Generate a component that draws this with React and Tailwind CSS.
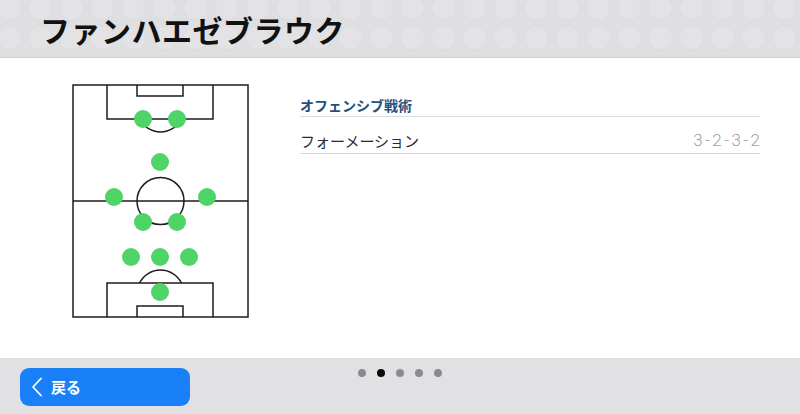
import React from 'react';

const players = [
  [143, 119], [177, 119],
  [160, 162],
  [114, 197], [207, 197],
  [143, 222], [177, 222],
  [131, 257], [160, 257], [189, 257],
  [160, 292],
];

// Formation pitch drawing
const Pitch = () => (
  <svg width="178" height="236" viewBox="72 84 178 236" fill="none">
    <g stroke="#1c1c1c" strokeWidth="1.5">
      <rect x="73" y="85" width="175" height="232" fill="#fff" />
      <line x1="73" y1="201" x2="248" y2="201" />
      <circle cx="160.5" cy="201" r="23.5" />
      <path d="M107 85V119H213V85" />
      <path d="M137 85V96H183V85" />
      <path d="M139.5 119A23.5 23.5 0 0 0 181.5 119" />
      <path d="M107 317V283H213V317" />
      <path d="M137 317V306H183V317" />
      <path d="M139.5 283A23.5 23.5 0 0 1 181.5 283" />
    </g>
    {players.map(([x, y], i) => (
      <circle key={i} cx={x} cy={y} r="9" fill="#4fd467" />
    ))}
  </svg>
);

const ChevronLeft = ({ className = "w-4 h-5" }) => (
  <svg className={className} viewBox="0 0 12 20" fill="none" stroke="currentColor" strokeWidth="1.8" strokeLinecap="round" strokeLinejoin="round">
    <path d="M10 1.5 2 10l8 8.5" />
  </svg>
);

const App = () => {
  return (
    <div className="w-[800px] h-[414px] flex flex-col bg-white overflow-hidden font-['Noto_Sans_CJK_JP','Noto_Sans',sans-serif]">
      {/* Header */}
      <div className="h-[58px] shrink-0 flex items-center pl-[40px] border-b border-[#cfcfd2] bg-[#dfdfe1] bg-[radial-gradient(circle,#e3e3e5_11px,#dcdcde_12px,transparent_13px)] bg-[length:31px_30px] bg-[position:-6px_-7px]">
        <h1 className="text-[30px] font-bold text-[#111] tracking-[0.5px] leading-none">ファンハエゼブラウク</h1>
      </div>

      {/* Content */}
      <div className="flex-1 flex">
        <div className="pl-[72px] pt-[26px]">
          <Pitch />
        </div>
        <div className="ml-[50px] w-[460px] pt-[37px]">
          <div className="text-[14px] font-bold text-[#23507e] border-b border-[#dcdcdc] leading-[20px] pb-[1px]">
            オフェンシブ戦術
          </div>
          <div className="flex items-center justify-between h-[37px] pt-[10px] border-b border-[#d6d6d6] text-[15px] leading-none">
            <span className="text-[#2a2a2a]">フォーメーション</span>
            <span className="text-[#a0a0a0] font-['Roboto',sans-serif] font-light text-[17px] tracking-[2.4px] mr-[-2.4px]">3-2-3-2</span>
          </div>
        </div>
      </div>

      {/* Footer */}
      <div className="h-[56px] shrink-0 bg-[#e1e1e4] grid grid-cols-[1fr_auto_1fr]">
        <div className="pl-[20px] pt-[10px]">
          <button className="w-[170px] h-[38px] rounded-[9px] bg-[#1a80f8] text-white flex items-center pl-[11px] gap-[8px]">
            <ChevronLeft className="w-[12px] h-[20px]" />
            <span className="text-[15px] font-bold">戻る</span>
          </button>
        </div>
        <div className="flex gap-[11px] pt-[11px]">
          <span className="w-[8px] h-[8px] rounded-full bg-[#8b8b8f]" />
          <span className="w-[8px] h-[8px] rounded-full bg-[#0a0a0a]" />
          <span className="w-[8px] h-[8px] rounded-full bg-[#8b8b8f]" />
          <span className="w-[8px] h-[8px] rounded-full bg-[#8b8b8f]" />
          <span className="w-[8px] h-[8px] rounded-full bg-[#8b8b8f]" />
        </div>
        <div />
      </div>
    </div>
  );
};

export default App;
